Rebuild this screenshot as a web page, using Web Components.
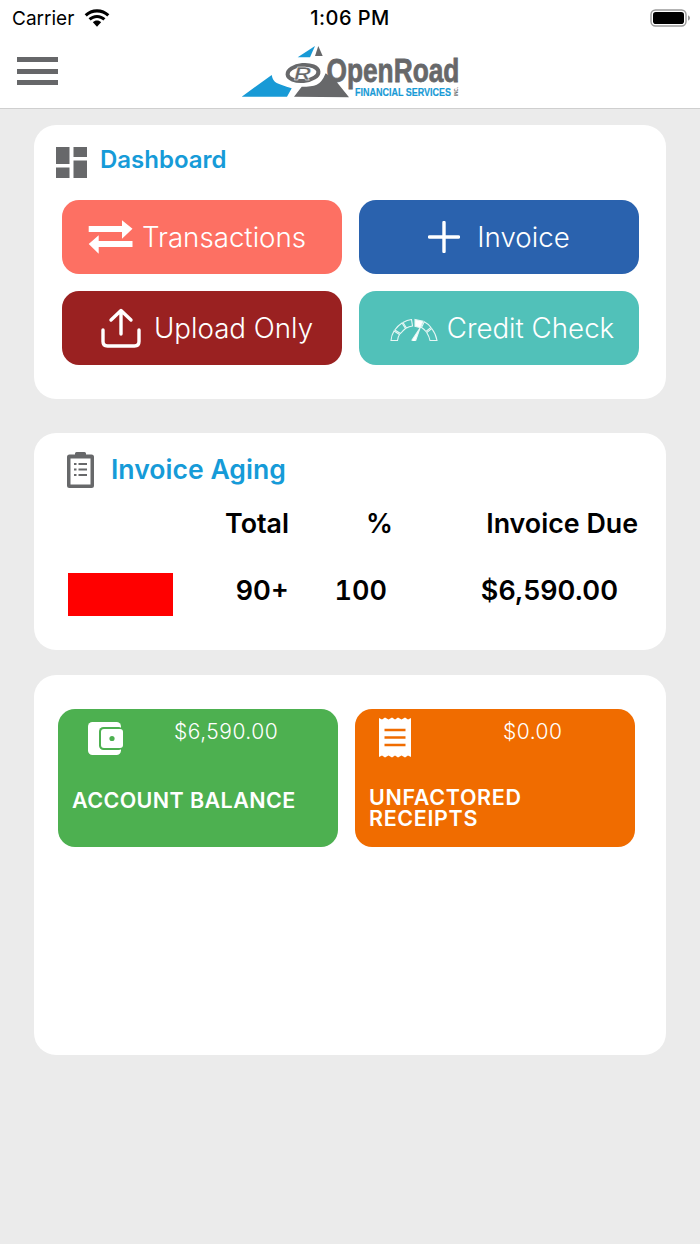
<!DOCTYPE html>
<html><head><meta charset="utf-8">
<style>
html,body{margin:0;padding:0;background:#ebebeb;font-family:Inter,"Liberation Sans",sans-serif;}
body{width:700px;height:1244px;overflow:hidden;}
.icon{display:block}
</style></head>
<body>
<template id="t-status"><style>
:host{display:flex;align-items:center;height:36px;background:#fff;color:#000;font-size:19px;position:relative;padding:0 9px 0 12px;box-sizing:border-box;}
.c{display:flex;align-items:center;gap:9px;flex:1;}
.t{position:absolute;left:0;right:0;text-align:center;font-weight:500;font-size:20px;letter-spacing:.45px}
</style><div class="c"><span>Carrier</span><svg width="28" height="19" viewBox="0 0 26 18" fill="#000"><path d="M13 3.200c3.700 0 7.100 1.400 9.700 3.800l2-2.100C21.600 2 17.500.2 13 .2S4.400 2 1.300 4.900l2 2.100C5.900 4.600 9.300 3.200 13 3.200z"/><path d="M13 8.500c2.300 0 4.400.9 6 2.300l2-2.100C18.900 6.800 16.100 5.600 13 5.600s-5.900 1.200-8 3.100l2 2.100c1.600-1.400 3.700-2.300 6-2.300z"/><path d="M13 11c-1.500 0-2.900.6-3.900 1.500L13 16.800l3.900-4.300C15.900 11.600 14.500 11 13 11z"/></svg></div><span class="t">1:06 PM</span>
<svg width="41" height="18" viewBox="0 0 41 18"><rect x="1" y="1" width="35" height="16" rx="4.500" fill="none" stroke="#9a9a9a" stroke-width="1.400"/><rect x="3" y="3" width="31" height="12" rx="2.800" fill="#000"/><path d="M38 6.500c1.300.3 2 1.300 2 2.500s-.7 2.200-2 2.500z" fill="#9a9a9a"/></svg>
</template>

<template id="t-nav"><style>
:host{display:flex;align-items:flex-start;height:72px;background:#fff;border-bottom:1px solid #cfcfcf;box-sizing:content-box;position:relative;}
.m{display:flex;flex-direction:column;gap:6.500px;margin:21px 0 0 17px;width:41px}
.m i{display:block;height:5px;background:#666769}
svg{position:absolute;left:240px;top:8px}
</style><div class="m"><i></i><i></i><i></i></div>
<svg width="222" height="56" viewBox="240 44 222 56">
<path d="M241.700 96.700 271.700 75q1 6 5 8t15 5.300l-4.700 8.400z" fill="#189ad6"/>
<path d="M294 96.700l7.700-10q10 0 15-2t9-11.500l10 7.500 13.300 16.500z" fill="#67686a"/>
<path d="M297.700 57.300 315 46l-5 11.300z" fill="#189ad6"/>
<path d="M315 56l3.300-10 4.400 10z" fill="#67686a"/>
<ellipse cx="303" cy="73" rx="15.500" ry="8" transform="rotate(-5 303 73)" fill="#fff" stroke="#67686a" stroke-width="4"/>
<text transform="translate(294 80) scale(1.300 1)" font-family="Liberation Sans" font-weight="700" font-style="italic" font-size="18" fill="#67686a" stroke="#fff" stroke-width=".4">R</text>
<text transform="translate(326.500 82) scale(1 1.250)" font-family="Liberation Sans" font-weight="700" font-size="26.300" fill="#67686a" stroke="#67686a" stroke-width=".6">OpenRoad</text>
<text transform="translate(355 96) scale(1 1.250)" font-family="Liberation Sans" font-weight="700" font-size="9" fill="#189ad6" stroke="#189ad6" stroke-width=".15">FINANCIAL SERVICES</text>
<text transform="translate(458 96) rotate(-90)" font-family="Liberation Sans" font-weight="700" font-size="4.500" fill="#67686a">INC.</text>
</svg>
</template>

<template id="t-card"><style>
:host{display:block;background:#fff;border-radius:22px;margin:0 34px;box-sizing:border-box;}
</style><slot></slot></template>

<template id="t-head"><style>
:host{display:flex;align-items:center;color:#169bd8;font-size:24px;font-weight:600;}
</style><slot></slot></template>

<template id="t-btn"><style>
:host{display:flex;align-items:center;justify-content:center;width:280px;height:74px;border-radius:17px;color:#fff;font-size:27.700px;font-weight:300;box-sizing:border-box;background:var(--bg);}
</style><slot></slot></template>

<template id="t-tile"><style>
:host{display:flex;flex-direction:column;width:280px;height:138px;border-radius:17px;color:#fff;box-sizing:border-box;background:var(--bg);position:relative}
.top{display:flex;align-items:flex-start;height:78px}
.amt{font-size:21px;font-weight:300;margin-left:var(--amtx);margin-top:var(--amty);letter-spacing:.5px}
.lab{font-size:21.500px;font-weight:600;line-height:21px;padding-left:var(--labx);letter-spacing:var(--ls);margin-top:var(--laby)}
</style><div class="top"><slot name="icon"></slot><span class="amt"><slot name="amount"></slot></span></div><div class="lab"><slot></slot></div></template>

<script>
for (const [name, id] of [['status-bar','t-status'],['nav-bar','t-nav'],['info-card','t-card'],['card-head','t-head'],['action-button','t-btn'],['stat-tile','t-tile']]) {
  customElements.define(name, class extends HTMLElement {
    constructor(){super();this.attachShadow({mode:'open'}).appendChild(document.getElementById(id).content.cloneNode(true));}
  });
}
</script>

<status-bar></status-bar>
<nav-bar></nav-bar>

<info-card style="margin-top:16px;height:274px;padding:22px 28px 0 22px;">
  <card-head>
    <svg class="icon" width="31" height="31" viewBox="0 0 31 31" fill="#67686a" style="margin-right:14px"><rect width="13.500" height="17"/><rect x="17.500" width="13.500" height="10"/><rect y="20.500" width="13.500" height="10.500"/><rect x="17.500" y="13.500" width="13.500" height="17.500"/></svg>
    <span style="position:relative;top:-3px;left:-1px">Dashboard</span>
  </card-head>
  <div style="display:grid;grid-template-columns:280px 280px;gap:17px;margin:22px 0 0 6px;">
    <action-button style="--bg:#fd7063;padding-right:10px">
      <svg class="icon" width="46" height="36" viewBox="0 0 46 36" fill="#fff" style="margin-right:8px"><path d="M.7 7H34V1.300L44.500 9.800 34 19.700V13H.7z"/><path d="M44.500 22H10.700v-5.700L.7 25l10 9.700V28h33.800z"/></svg>
      <span>Transactions</span>
    </action-button>
    <action-button style="--bg:#2a62ae">
      <svg class="icon" width="32" height="32" viewBox="0 0 32 32" fill="none" stroke="#fff" stroke-width="3.400" stroke-linecap="round" style="margin-right:17px"><path d="M16 1.500v29M1.500 16h29"/></svg>
      <span>Invoice</span>
    </action-button>
    <action-button style="--bg:#9a2121;padding-left:10px">
      <svg class="icon" width="40" height="40" viewBox="0 0 40 40" fill="none" stroke="#fff" stroke-width="3.400" stroke-linecap="round" stroke-linejoin="round" style="margin-right:13px"><path d="M20 26V3M10 12l10-9.500L30 12"/><path d="M2 22v11.500q0 4.500 4.500 4.500h27q4.500 0 4.500-4.500V22"/></svg>
      <span>Upload Only</span>
    </action-button>
    <action-button style="--bg:#51c1b9;padding-left:6px">
      <svg class="icon" width="48" height="25" viewBox="0 0 48 25" fill="none" stroke="#e6f7f5" stroke-width="1.100" style="margin-right:9px"><path d="M1 24.500Q1.500 19 4 15l5.500 3.500Q7.800 21 7.500 24.500z"/><path d="M4.800 14Q8 9.500 12 7l3.500 5.500Q13 14.500 10.500 17.500z"/><path d="M13 6.500Q17 4 21.500 3.500l1 6.500q-3.500.5-6 2z"/><path d="M25 3.500l8 1.700-2.500 6.500-5.500-1.300z" fill="#fff"/><path d="M34.200 5.700q4 2 6.800 5.800l-5 4q-2-2.600-4.500-4z"/><path d="M41.700 12.500Q46 18 47 24.500h-7q-.7-4-3.300-8z"/><path d="M22 24l8-12-4.500 13a2 2 0 0 1-3.500-1z" fill="#fff"/></svg>
      <span>Credit Check</span>
    </action-button>
  </div>
</info-card>

<info-card style="margin-top:34px;height:217px;padding:19px 28px 0 33px;">
  <card-head>
    <svg class="icon" width="27" height="36" viewBox="0 0 27 36" style="margin-right:17px"><path d="M2.500 2.500H8V1.500q0-1.500 1.500-1.500h8q1.500 0 1.500 1.500v1h5.500Q27 2.500 27 5v28.500q0 2.500-2.500 2.500h-22Q0 36 0 33.500V5q0-2.500 2.500-2.500z" fill="#67686a"/><rect x="3.500" y="6.500" width="20" height="26" fill="#fff"/><path d="M7 12h2.500M11.500 12H20M7 17.500h2.500M11.500 17.500H20M7 23h2.500M11.500 23H20" stroke="#67686a" stroke-width="2"/></svg>
    <span style="font-size:26.600px;position:relative;top:-1px">Invoice Aging</span>
  </card-head>
  <div style="display:grid;grid-template-columns:222px 104px 245px;margin-top:19px;font-size:26.800px;font-weight:600;color:#000;text-align:right;line-height:32px;">
    <span>Total</span><span>%</span><span>Invoice Due</span>
  </div>
  <div style="display:grid;grid-template-columns:105px 116px 98px 231px;align-items:start;margin:34px 0 0 1px;font-size:27px;font-weight:600;color:#000;text-align:right;line-height:36px;">
    <div style="background:#f00;height:43px"></div><span>90+</span><span style="font-variant-numeric:tabular-nums">100</span><span>$6,590.00</span>
  </div>
</info-card>

<info-card style="margin-top:25px;height:380px;padding:34px 0 0 24px;">
  <div style="display:flex;gap:17px;">
    <stat-tile style="--bg:#4db050;--amtx:51px;--amty:10px;--labx:14px;--laby:3px;--ls:.4px">
      <svg slot="icon" class="icon" width="35" height="33" viewBox="0 0 35 33" style="margin:13px 0 0 30px"><rect width="33" height="33" rx="4.500" fill="#fff"/><rect x="11" y="5" width="24" height="23" rx="4.500" fill="#4db050"/><rect x="13" y="7" width="22" height="19" rx="3" fill="#fff"/><circle cx="24" cy="16.500" r="2.600" fill="#4db050"/></svg>
      <span slot="amount">$6,590.00</span>
      ACCOUNT BALANCE
    </stat-tile>
    <stat-tile style="--bg:#f06c00;--amtx:92px;--amty:10px;--labx:14px;--laby:0px;--ls:.65px">
      <svg slot="icon" class="icon" width="32" height="41" viewBox="0 0 32 41" style="margin:8px 0 0 24px"><path d="M0 1l3 1.500L6 .5 9.500 2.500 13 .5l3 2 3-2 3.500 2L26 .5l3 2L32 1v39l-3-1.500-3 2-3.500-2-3.500 2-3-2-3 2-3.500-2-3.500 2-3-2L0 40z" fill="#fff"/><path d="M5.500 13h21M5.500 20.500h21M5.500 28h21" stroke="#f06c00" stroke-width="2.400"/></svg>
      <span slot="amount">$0.00</span>
      UNFACTORED<br>RECEIPTS
    </stat-tile>
  </div>
</info-card>
</body></html>
